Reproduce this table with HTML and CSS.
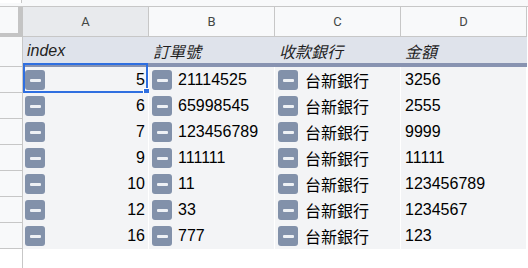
FILE: index.html
```html
<!DOCTYPE html>
<html lang="zh-Hant">
<head>
<meta charset="utf-8">
<title>Sheet</title>
<link rel="stylesheet" href="styles.css">
</head>
<body>
<div class="sheet">
  <div class="topbar"><div class="topbar-stub"></div></div>
  <div class="grid">
    <div class="corner"></div>
    <div class="colhead colhead-active">A</div>
    <div class="colhead">B</div>
    <div class="colhead">C</div>
    <div class="colhead">D</div>

    <div class="rowhead rowhead-frozen"></div>
    <div class="hcell">index</div>
    <div class="hcell">訂單號</div>
    <div class="hcell">收款銀行</div>
    <div class="hcell">金額</div>

    <div class="rowhead"></div>
    <div class="cell cell-index selected"><span class="chip"></span><span>5</span><span class="sel"><span class="handle"></span></span></div>
    <div class="cell cell-chip"><span class="chip"></span><span>21114525</span></div>
    <div class="cell cell-chip"><span class="chip"></span><span class="cjk">台新銀行</span></div>
    <div class="cell">3256</div>

    <div class="rowhead"></div>
    <div class="cell cell-index"><span class="chip"></span><span>6</span></div>
    <div class="cell cell-chip"><span class="chip"></span><span>65998545</span></div>
    <div class="cell cell-chip"><span class="chip"></span><span class="cjk">台新銀行</span></div>
    <div class="cell">2555</div>

    <div class="rowhead"></div>
    <div class="cell cell-index"><span class="chip"></span><span>7</span></div>
    <div class="cell cell-chip"><span class="chip"></span><span>123456789</span></div>
    <div class="cell cell-chip"><span class="chip"></span><span class="cjk">台新銀行</span></div>
    <div class="cell">9999</div>

    <div class="rowhead"></div>
    <div class="cell cell-index"><span class="chip"></span><span>9</span></div>
    <div class="cell cell-chip"><span class="chip"></span><span>111111</span></div>
    <div class="cell cell-chip"><span class="chip"></span><span class="cjk">台新銀行</span></div>
    <div class="cell">11111</div>

    <div class="rowhead"></div>
    <div class="cell cell-index"><span class="chip"></span><span>10</span></div>
    <div class="cell cell-chip"><span class="chip"></span><span>11</span></div>
    <div class="cell cell-chip"><span class="chip"></span><span class="cjk">台新銀行</span></div>
    <div class="cell">123456789</div>

    <div class="rowhead"></div>
    <div class="cell cell-index"><span class="chip"></span><span>12</span></div>
    <div class="cell cell-chip"><span class="chip"></span><span>33</span></div>
    <div class="cell cell-chip"><span class="chip"></span><span class="cjk">台新銀行</span></div>
    <div class="cell">1234567</div>

    <div class="rowhead"></div>
    <div class="cell cell-index"><span class="chip"></span><span>16</span></div>
    <div class="cell cell-chip"><span class="chip"></span><span>777</span></div>
    <div class="cell cell-chip"><span class="chip"></span><span class="cjk">台新銀行</span></div>
    <div class="cell">123</div>

    <div class="rowhead rowhead-empty"></div>
    <div class="empty"></div>
    <div class="empty"></div>
    <div class="empty"></div>
    <div class="empty"></div>
  </div>
</div>
</body>
</html>
```

FILE: styles.css
```css
* {
  box-sizing: border-box;
}

html, body {
  margin: 0;
  padding: 0;
  background: #ffffff;
}

body {
  font-family: "Liberation Sans", Arial, "Noto Sans CJK TC", sans-serif;
  color: #000000;
  width: 528px;
  height: 268px;
  overflow: hidden;
}

.topbar {
  height: 7px;
  background: #f8f9fa;
  border-bottom: 1px solid #c7c7c7;
  display: flex;
}

.topbar-stub {
  width: 22px;
  height: 3px;
  background: #ffffff;
  border-right: 1px solid #c7c7c7;
}

.grid {
  display: grid;
  grid-template-columns: 23px 126px 126px 126px 126px;
  grid-auto-rows: auto;
}

.corner {
  height: 30px;
  background: #f8f9fa;
  border-right: 5px solid #c4c4c4;
  border-bottom: 4px solid #c4c4c4;
}

.colhead {
  height: 30px;
  display: flex;
  align-items: center;
  justify-content: center;
  background: #f8f9fa;
  border-right: 1px solid #c7c7c7;
  border-bottom: 1px solid #c7c7c7;
  font-family: Roboto, "Liberation Sans", sans-serif;
  font-size: 13px;
  color: #444746;
}

.colhead-active {
  background: #e8eaed;
}

.rowhead {
  height: 26px;
  background: #f8f9fa;
  border-right: 1px solid #c7c7c7;
  border-bottom: 1px solid #c7c7c7;
}

.rowhead-frozen {
  height: 30px;
}

.rowhead-empty {
  height: 30px;
  background: #ffffff;
  border-bottom: none;
}

.hcell {
  height: 30px;
  padding: 1px 4px 0;
  background: #dfe3eb;
  border-bottom: 4px solid #8893b1;
  font-size: 16px;
  font-style: italic;
  color: #1f1f1f;
  font-family: "Liberation Sans", Arial, "Noto Sans CJK TC", sans-serif;
  display: flex;
  align-items: center;
}

.cell {
  height: 26px;
  background: #f3f4f6;
  border-right: 1px solid #ffffff;
  padding: 0 4px;
  font-size: 16px;
  display: flex;
  align-items: center;
  white-space: nowrap;
  position: relative;
}

.cell-index {
  justify-content: space-between;
  padding: 0 3px 0 2px;
}

.cell-chip {
  padding: 0 3px;
  gap: 6px;
}

.cjk {
  font-family: "Noto Sans CJK TC", sans-serif;
  margin-left: 1px;
}

.chip {
  width: 20px;
  height: 20px;
  flex: none;
  border-radius: 3px;
  background: #8291aa;
  display: flex;
  align-items: center;
  justify-content: center;
}

.chip::after {
  content: "";
  width: 11px;
  height: 3px;
  border-radius: 1px;
  background: #eef1f5;
}

.sel {
  position: absolute;
  left: 0;
  top: -4px;
  right: 0;
  bottom: 0;
  border: 2px solid #2f6fe0;
}

.handle {
  position: absolute;
  right: -5px;
  bottom: -5px;
  width: 8px;
  height: 8px;
  background: #2f6fe0;
  border: 1px solid #ffffff;
}

.empty {
  height: 30px;
  background: #ffffff;
}
```
